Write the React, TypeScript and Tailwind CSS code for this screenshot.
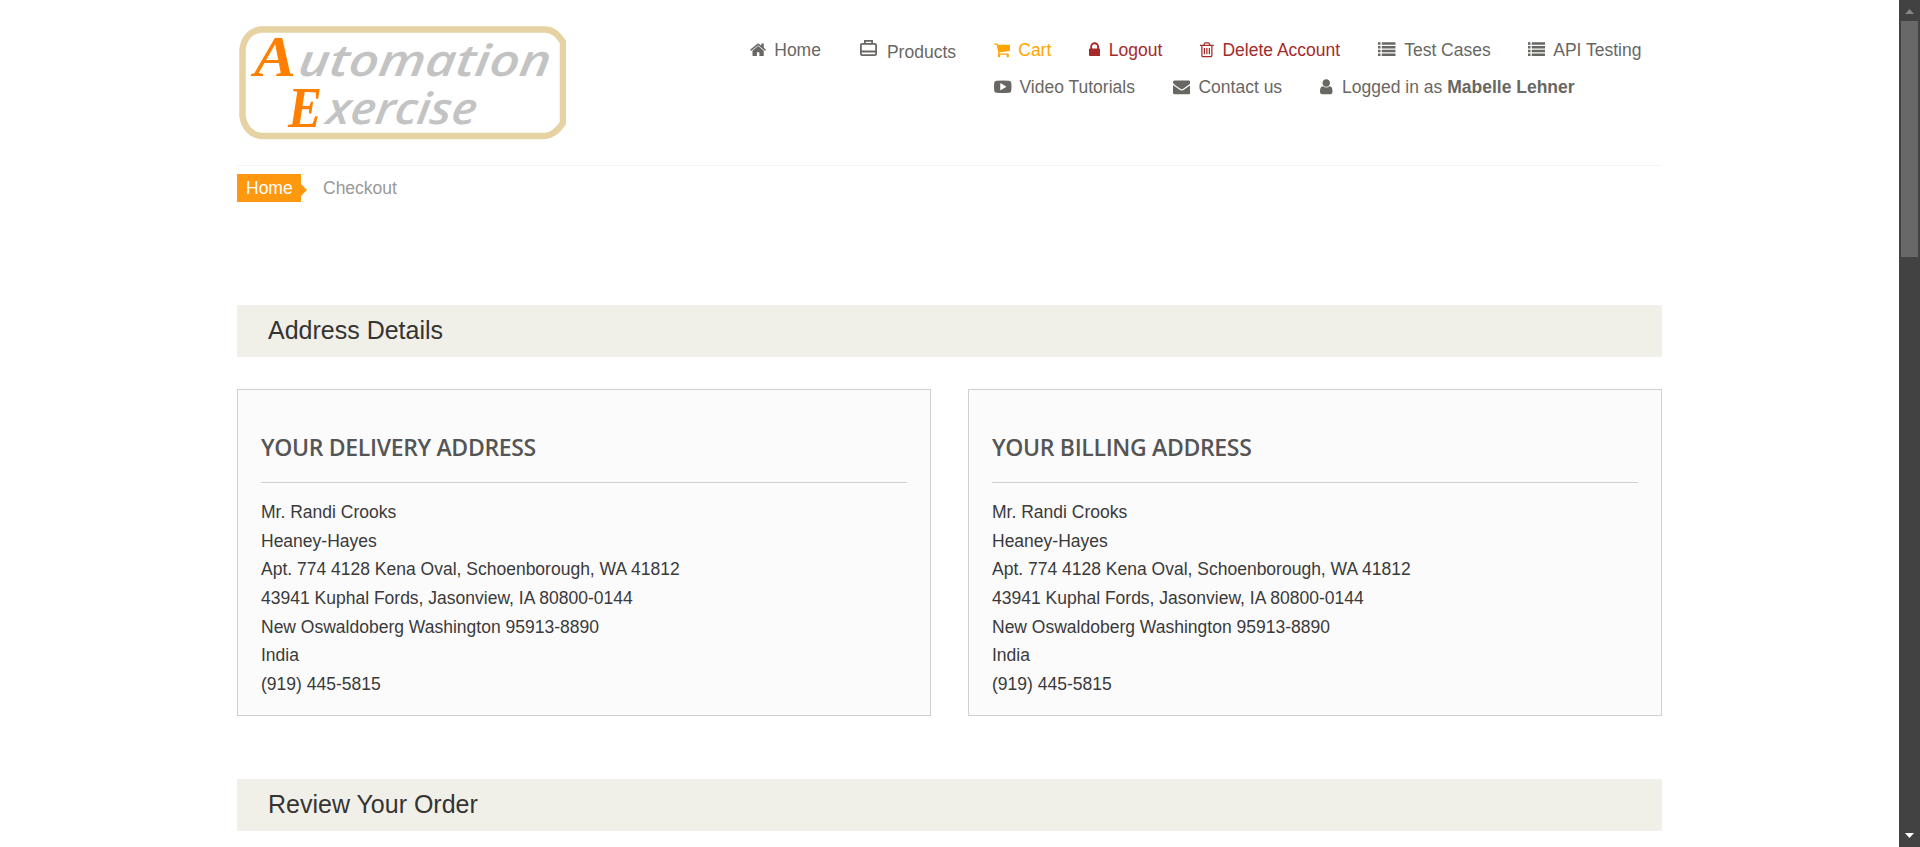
import React from "react";

type IconProps = { box: string; w: string; children: React.ReactNode };

function Icon({ box, w, children }: IconProps) {
  return (
    <svg viewBox={box} className={`${w} h-[17.5px] shrink-0 fill-current`}>
      {children}
    </svg>
  );
}

const HomeIcon = () => (
  <Icon box="64 0 1664 1792" w="w-[16.25px]">
    <path d="M1472 992v480q0 26-19 45t-45 19h-384v-384h-256v384h-384q-26 0-45-19t-19-45v-480q0-1 .5-3t.5-3l575-474 575 474q1 2 1 6zm223-69l-62 74q-8 9-21 11h-3q-13 0-21-7l-692-577-692 577q-12 8-24 7-13-2-21-11l-62-74q-8-10-7-23.5t11-21.5l719-599q32-26 76-26t76 26l244 204v-195q0-14 9-23t23-9h192q14 0 23 9t9 23v408l219 182q10 8 11 21.5t-7 23.5z" />
  </Icon>
);

const CartIcon = () => (
  <Icon box="64 0 1664 1792" w="w-[16.25px]">
    <path d="M704 1536q0 52-38 90t-90 38-90-38-38-90 38-90 90-38 90 38 38 90zm896 0q0 52-38 90t-90 38-90-38-38-90 38-90 90-38 90 38 38 90zm128-1088v512q0 24-16.5 42.5t-40.5 21.5l-1044 122q13 60 13 70 0 16-24 64h920q26 0 45 19t19 45-19 45-45 19h-1024q-26 0-45-19t-19-45q0-11 8-31.5t16-36 21.5-40 15.5-29.5l-177-823h-204q-26 0-45-19t-19-45 19-45 45-19h256q16 0 28.5 6.5t19.5 15.5 13 24.5 8 26 5.5 29.5 4.5 26h1201q26 0 45 19t19 45z" />
  </Icon>
);

const LockIcon = () => (
  <Icon box="320 0 1152 1792" w="w-[11.25px]">
    <path d="M640 768h512v-192q0-106-75-181t-181-75-181 75-75 181v192zm832 96v576q0 40-28 68t-68 28h-960q-40 0-68-28t-28-68v-576q0-40 28-68t68-28h32v-192q0-184 132-316t316-132 316 132 132 316v192h32q40 0 68 28t28 68z" />
  </Icon>
);

const TrashIcon = () => (
  <Icon box="192 0 1408 1792" w="w-[13.75px]">
    <path d="M704 736v576q0 14-9 23t-23 9h-64q-14 0-23-9t-9-23v-576q0-14 9-23t23-9h64q14 0 23 9t9 23zm256 0v576q0 14-9 23t-23 9h-64q-14 0-23-9t-9-23v-576q0-14 9-23t23-9h64q14 0 23 9t9 23zm256 0v576q0 14-9 23t-23 9h-64q-14 0-23-9t-9-23v-576q0-14 9-23t23-9h64q14 0 23 9t9 23zm128 724v-948h-896v948q0 22 7 40.5t14.5 27 10.5 8.5h832q3 0 10.5-8.5t14.5-27 7-40.5zm-672-1076h448l-48-117q-7-9-17-11h-317q-10 2-17 11zm928 32v64q0 14-9 23t-23 9h-96v948q0 83-47 143.5t-113 60.5h-832q-66 0-113-58.5t-47-141.5v-952h-96q-14 0-23-9t-9-23v-64q0-14 9-23t23-9h309l70-167q15-37 54-63t79-26h320q40 0 79 26t54 63l70 167h309q14 0 23 9t9 23z" />
  </Icon>
);

const ListIcon = () => (
  <Icon box="0 0 1792 1792" w="w-[17.5px]">
    {[256, 640, 1024, 1408].map((y) => (
      <g key={y}>
        <rect x="0" y={y - 128} width="256" height="256" rx="32" />
        <rect x="384" y={y - 128} width="1408" height="256" rx="32" />
      </g>
    ))}
  </Icon>
);

const VideoIcon = () => (
  <Icon box="0 0 1792 1792" w="w-[17.5px]">
    <path
      fillRule="evenodd"
      d="M280 270Q896 230 1512 270Q1700 280 1750 420Q1792 600 1792 896Q1792 1192 1750 1372Q1700 1512 1512 1522Q896 1562 280 1522Q92 1512 42 1372Q0 1192 0 896Q0 600 42 420Q92 280 280 270ZM711 1240L1235 933Q1270 896 1235 860L711 545Q640 520 640 576V1216Q640 1270 711 1240Z"
    />
  </Icon>
);

const MailIcon = () => (
  <Icon box="0 0 1792 1792" w="w-[17.5px]">
    <path d="M1792 710v794q0 66-47 113t-113 47h-1472q-66 0-113-47t-47-113v-794q44 49 101 87 362 246 497 345 57 42 92.5 65.5t94.5 48 110 24.5h2q51 0 110-24.5t94.5-48 92.5-65.5q170-123 498-345 57-39 100-87zm0-294q0 79-49 151t-122 123q-376 261-468 325-10 7-42.5 31t-54 38.5-52 32.5-57.5 27-50 9h-2q-23 0-50-9t-57.5-27-52-32.5-54-38.5-42.5-31q-91-64-262-182.5t-205-142.5q-62-42-117-115.5t-55-136.5q0-78 41.5-130t118.5-52h1472q65 0 112.5 47t47.5 113z" />
  </Icon>
);

const UserIcon = () => (
  <Icon box="256 0 1280 1792" w="w-[12.5px]">
    <path d="M1536 1399q0 109-62.5 187t-150.5 78h-854q-88 0-150.5-78t-62.5-187q0-85 8.5-160.5t31.5-152 58.5-131 94-89 134.5-34.5q131 128 313 128t313-128q76 0 134.5 34.5t94 89 58.5 131 31.5 152 8.5 160.5zm-256-887q0 159-112.5 271.5t-271.5 112.5-271.5-112.5-112.5-271.5 112.5-271.5 271.5-112.5 271.5 112.5 112.5 271.5z" />
  </Icon>
);

const CaseIcon = () => (
  <svg viewBox="0 0 17 16" className="h-4 w-[17px] shrink-0 fill-none stroke-current" strokeWidth="1.8">
    <rect x="0.9" y="3.9" width="15.2" height="11.2" rx="1.2" />
    <path d="M4.9 4V0.9H12.1V4M1 11.5H16" />
  </svg>
);

function Logo() {
  return (
    <svg viewBox="0 0 327 114" className="h-[114px] w-[327px]">
      <path
        d="M324 16Q316 3.5 306 3.5H22C12 4.500 4.500 12 3.500 24V90C5 101 12 109 22 110H306Q316 109 324 97Z"
        fill="none"
        stroke="#e6d2a2"
        strokeWidth="6.5"
      />
      <g fontStyle="italic">
        <g fontFamily="'Liberation Serif', serif" fontWeight="bold" fill="#ff8000">
          <text x="15" y="50" fontSize="57" textLength="42" lengthAdjust="spacingAndGlyphs">A</text>
          <text x="49" y="101" fontSize="56" textLength="34" lengthAdjust="spacingAndGlyphs">E</text>
        </g>
        <g fontFamily="'Open Sans', sans-serif" fontWeight="600" fill="#c3c3c3">
          <text transform="translate(58 50) skewX(-8)" fontSize="44" textLength="252" lengthAdjust="spacingAndGlyphs">utomation</text>
          <text transform="translate(86 98) skewX(-8)" fontSize="44" textLength="150" lengthAdjust="spacingAndGlyphs">xercise</text>
        </g>
      </g>
    </svg>
  );
}

type NavProps = { icon: React.ReactNode; left: string; gap: string; children: React.ReactNode };

function NavLink({ icon, left, gap, children }: NavProps) {
  return (
    <a className={`flex items-center whitespace-nowrap ${left} ${gap}`}>
      {icon}
      <span>{children}</span>
    </a>
  );
}

const address = [
  "Mr. Randi Crooks",
  "Heaney-Hayes",
  "Apt. 774 4128 Kena Oval, Schoenborough, WA 41812",
  "43941 Kuphal Fords, Jasonview, IA 80800-0144",
  "New Oswaldoberg Washington 95913-8890",
  "India",
  "(919) 445-5815",
];

function AddressCard({ title }: { title: string }) {
  return (
    <section className="h-[327px] w-[694px] border border-[#d0d0d0] bg-[#fbfbfb] px-[23px] pt-[42px]">
      <h3 className="h-[51px] border-b border-[#d0d0d0] font-['Open_Sans',sans-serif] text-[23px] leading-[30px] font-semibold tracking-[-0.33px] text-[#555]">
        {title}
      </h3>
      <ul className="pt-[14.8px] text-[17.5px] leading-[28.7px] text-[#3a3a3a]">
        {address.map((line) => (
          <li key={line}>{line}</li>
        ))}
      </ul>
    </section>
  );
}

function SectionBar({ children }: { children: React.ReactNode }) {
  return (
    <h2 className="h-[52px] bg-[#f0f0e9] pl-[31px] text-[25px] leading-[51px] text-[#363432]">{children}</h2>
  );
}

export default function App() {
  return (
    <div className="flex h-[847px] w-full overflow-hidden bg-white font-['Liberation_Sans',sans-serif] text-[17.5px]">
      <div className="w-[1899px] pl-[237px]">
        <main className="w-[1425px]">
          <header className="flex h-[166px] border-b border-[#f5f5f5]">
            <div className="w-[512px] pt-[26px] pl-[2px]">
              <Logo />
            </div>
            <nav className="flex flex-col pt-[31px] text-[17.5px] leading-[36px] text-[#696763]">
              <div className="flex h-[37px]">
                <NavLink icon={<HomeIcon />} left="ml-[1px]" gap="gap-[8px]">Home</NavLink>
                <a className="ml-[39px] flex items-center gap-[10px]">
                  <span className="pb-[4px]"><CaseIcon /></span>
                  <span className="pt-[4px]">Products</span>
                </a>
                <span className="flex text-[orange]">
                  <NavLink icon={<CartIcon />} left="ml-[38px]" gap="gap-[8px]">Cart</NavLink>
                </span>
                <span className="flex text-[brown]">
                  <NavLink icon={<LockIcon />} left="ml-[37.5px]" gap="gap-[8.8px]">Logout</NavLink>
                  <NavLink icon={<TrashIcon />} left="ml-[37.5px]" gap="gap-[8.8px]">Delete Account</NavLink>
                </span>
                <NavLink icon={<ListIcon />} left="ml-[38px]" gap="gap-[8.5px]">Test Cases</NavLink>
                <NavLink icon={<ListIcon />} left="ml-[37px]" gap="gap-[8px]">API Testing</NavLink>
              </div>
              <div className="flex h-[37px] pl-[245px]">
                <NavLink icon={<VideoIcon />} left="ml-0" gap="gap-[8px]">Video Tutorials</NavLink>
                <NavLink icon={<MailIcon />} left="ml-[38px]" gap="gap-[8px]">Contact us</NavLink>
                <NavLink icon={<UserIcon />} left="ml-[38px]" gap="gap-[9.5px]">
                  Logged in as <b>Mabelle Lehner</b>
                </NavLink>
              </div>
            </nav>
          </header>

          <ol className="mt-2 flex h-7 items-center leading-7">
            <li className="h-7 w-16 bg-[#fe980f] pl-[9px] text-white">Home</li>
            <li>
              <svg viewBox="0 0 6 12" className="mt-1 h-3 w-1.5 fill-[#fe980f]">
                <path d="M0 0L6 6L0 12Z" />
              </svg>
            </li>
            <li className="ml-[16px] text-[#999]">Checkout</li>
          </ol>

          <div className="pt-[103px]">
            <SectionBar>Address Details</SectionBar>
          </div>
          <div className="mt-8 flex justify-between">
            <AddressCard title="YOUR DELIVERY ADDRESS" />
            <AddressCard title="YOUR BILLING ADDRESS" />
          </div>
          <div className="pt-[63px]">
            <SectionBar>Review Your Order</SectionBar>
          </div>
        </main>
      </div>

      <aside className="flex w-[21px] flex-col items-center bg-[#424242]">
        <svg viewBox="0 0 9 5" className="mt-[9px] h-[5px] w-[9px] fill-[#868686]">
          <path d="M4.5 0L9 5H0Z" />
        </svg>
        <div className="mt-[7px] h-[236px] w-[17px] bg-[#686868]" />
        <svg viewBox="0 0 9 5" className="mt-auto mb-[9px] h-[5px] w-[9px] fill-white">
          <path d="M0 0H9L4.5 5Z" />
        </svg>
      </aside>
    </div>
  );
}
